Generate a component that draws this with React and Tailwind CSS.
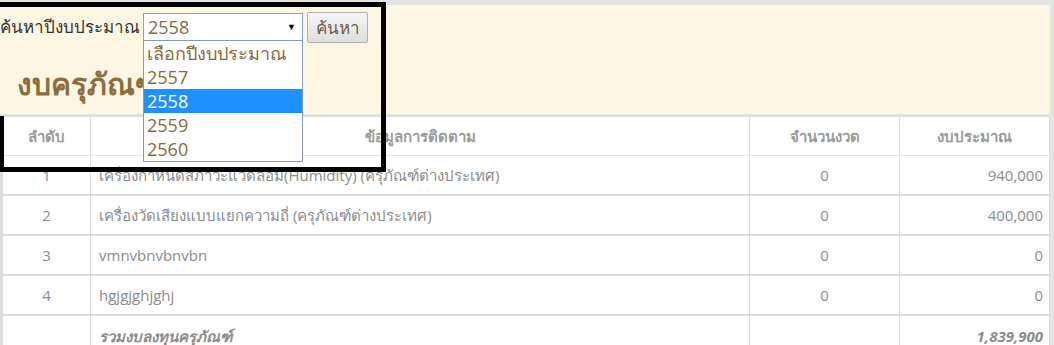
import React from 'react';

const rows = [
  { no: 1, name: 'เครื่องกำหนดสภาวะแวดล้อม(Humidity) (ครุภัณฑ์ต่างประเทศ)', qty: 0, budget: '940,000' },
  { no: 2, name: 'เครื่องวัดเสียงแบบแยกความถี่ (ครุภัณฑ์ต่างประเทศ)', qty: 0, budget: '400,000' },
  { no: 3, name: 'vmnvbnvbnvbn', qty: 0, budget: '0' },
  { no: 4, name: 'hgjgjghjghj', qty: 0, budget: '0' },
];

const years = ['เลือกปีงบประมาณ', '2557', '2558', '2559', '2560'];

const cols = 'grid grid-cols-[88px_659px_150px_149px]';

const App = () => {
  return (
    <div className="relative w-[1054px] h-[345px] overflow-hidden bg-[#e3e3e3] pt-[5px] pr-[4px] font-['Open_Sans','Noto_Sans',sans-serif]">
      {/* Search panel */}
      <div className="h-[109px] bg-[#fdf6e3]">
        <div className="flex items-center pt-[4px] h-[39px]">
          <span className="w-[143px] text-[17px] text-[#333] leading-none whitespace-nowrap">ค้นหาปีงบประมาณ</span>
          <div className="w-[160px] h-[28px] border border-[#7aa7d6] bg-white flex items-center justify-between pl-[4px] pr-[6px]">
            <span className="text-[18px] text-[#8a6a3b] leading-none">2558</span>
            <span className="text-[9px] text-black leading-none">▼</span>
          </div>
          <button className="ml-[4px] w-[61px] h-[31px] mt-[2px] border border-[#b0b0b0] rounded-[2px] bg-gradient-to-b from-[#f6f6f6] to-[#dedede] text-[17px] text-[#6b5b48]">
            ค้นหา
          </button>
        </div>
        <h2 className="mt-[25px] ml-[17px] text-[30px] font-bold text-[#8d6c3d] leading-none">งบครุภัณฑ์</h2>
      </div>

      {/* Table */}
      <div className="mt-[1px] border-t-2 border-l-[3px] border-r border-[#dddddd] bg-white text-[15px] text-[#8c8c8c]">
        <div className={`${cols} h-[39px] border-b border-[#e6e6e6] font-bold text-[#9a9a9a]`}>
          <div className="flex items-center justify-center border-r border-[#dddddd]">ลำดับ</div>
          <div className="flex items-center justify-center border-r border-[#dddddd]">ข้อมูลการติดตาม</div>
          <div className="flex items-center justify-center border-r border-[#dddddd]">จำนวนงวด</div>
          <div className="flex items-center justify-center">งบประมาณ</div>
        </div>
        {rows.map((row) => (
          <div key={row.no} className={`${cols} h-[40px] border-b-2 border-[#dddddd]`}>
            <div className="flex items-center justify-center border-r border-[#dddddd]">{row.no}</div>
            <div className="flex items-center pl-[8px] border-r border-[#dddddd]">{row.name}</div>
            <div className="flex items-center justify-center border-r border-[#dddddd]">{row.qty}</div>
            <div className="flex items-center justify-end pr-[6px]">{row.budget}</div>
          </div>
        ))}
        <div className={`${cols} h-[40px] font-bold italic text-[#8c8c8c]`}>
          <div className="border-r border-[#dddddd]"></div>
          <div className="flex items-center pl-[8px] border-r border-[#dddddd]">รวมงบลงทุนครุภัณฑ์</div>
          <div className="border-r border-[#dddddd]"></div>
          <div className="flex items-center justify-end pr-[6px]">1,839,900</div>
        </div>
      </div>

      {/* Open select list */}
      <div className="absolute left-[143px] top-[40px] w-[160px] border border-[#7f9db9] bg-white">
        {years.map((y) => (
          <div
            key={y}
            className={`h-[24px] pl-[3px] flex items-center text-[18px] leading-none ${
              y === '2558' ? 'bg-[#1e90ff] text-white' : 'text-[#8a6a3b]'
            }`}
          >
            {y}
          </div>
        ))}
      </div>

      {/* Annotation frame */}
      <div className="absolute left-0 top-[2px] w-[386px] h-[170px] border-t-[5px] border-r-[5px] border-b-[5px] border-black pointer-events-none"></div>
      <div className="absolute left-0 top-[116px] w-[4px] h-[56px] bg-black"></div>
    </div>
  );
};

export default App;
